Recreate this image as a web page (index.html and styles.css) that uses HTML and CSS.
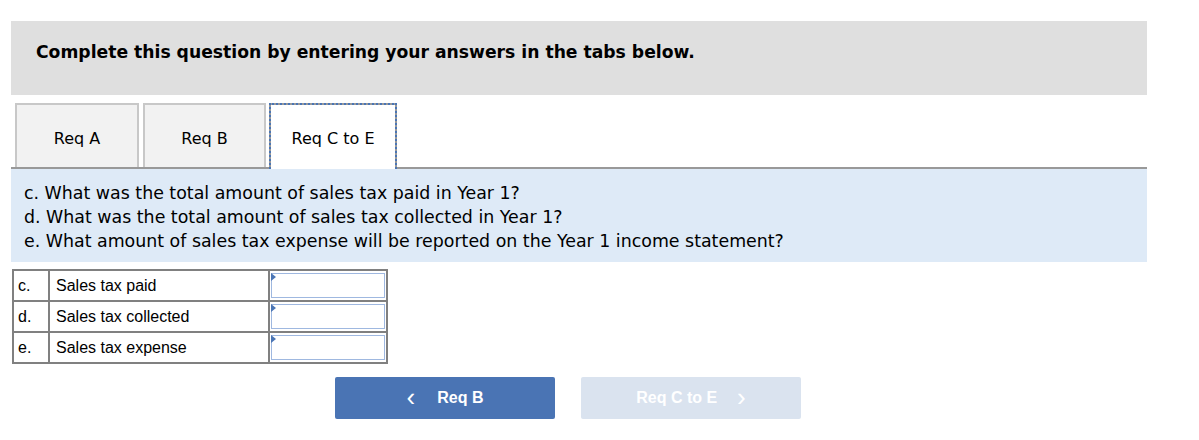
FILE: index.html
```html
<!DOCTYPE html>
<html>
<head>
<meta charset="utf-8">
<link rel="stylesheet" href="styles.css">
</head>
<body>
<div class="wrap">
  <div class="header">Complete this question by entering your answers in the tabs below.</div>
  <div class="tabs">
    <div class="tab tab-a">Req A</div>
    <div class="tab tab-b">Req B</div>
    <div class="tab tab-active">Req C to E</div>
  </div>
  <div class="panel">
    <div>c. What was the total amount of sales tax paid in Year 1?</div>
    <div>d. What was the total amount of sales tax collected in Year 1?</div>
    <div>e. What amount of sales tax expense will be reported on the Year 1 income statement?</div>
  </div>
  <table class="answers">
    <tr><td class="lbl">c.</td><td class="desc">Sales tax paid</td><td class="inp"><div class="box"></div></td></tr>
    <tr><td class="lbl">d.</td><td class="desc">Sales tax collected</td><td class="inp"><div class="box"></div></td></tr>
    <tr><td class="lbl">e.</td><td class="desc">Sales tax expense</td><td class="inp"><div class="box"></div></td></tr>
  </table>
  <div class="nav">
    <div class="btn btn-prev"><span class="chev">&lsaquo;</span><span>Req B</span></div>
    <div class="btn btn-next"><span>Req C to E</span><span class="chev">&rsaquo;</span></div>
  </div>
</div>
</body>
</html>
```
FILE: styles.css
```css
html, body { margin: 0; padding: 0; background: #fff; }
body { font-family: "DejaVu Sans", Verdana, sans-serif; color: #000; }
.wrap { width: 1136px; margin-left: 11px; padding-top: 21px; }
.header {
  background: #dfdfdf;
  height: 74px;
  box-sizing: border-box;
  padding-left: 25px;
  padding-bottom: 12px;
  display: flex;
  align-items: center;
  font-weight: bold;
  font-size: 17.2px;
}
.tabs {
  display: flex;
  margin-top: 8px;
  padding-left: 4px;
  border-bottom: 2px solid #999;
  height: 64px;
  align-items: flex-end;
}
.tab {
  box-sizing: border-box;
  height: 64px;
  background: #f2f2f2;
  border: 2px solid #c8c8c8;
  border-bottom: none;
  display: flex;
  align-items: center;
  justify-content: center;
  font-size: 16px;
  padding-top: 4px;
}
.tab-a { width: 124px; margin-right: 4px; }
.tab-b { width: 123px; margin-right: 3px; }
.tab-active {
  position: relative;
  width: 128px;
  height: 66px;
  margin-bottom: -2px;
  background: #fff;
  border: 2px solid #999;
  border-bottom: none;
  padding-top: 2px;
}
.tab-active::before {
  content: "";
  position: absolute;
  left: -2px;
  right: -2px;
  top: -2px;
  bottom: 0;
  border: 2px dotted #4a75b5;
  border-bottom: none;
}
.panel {
  background: #deeaf7;
  height: 93px;
  box-sizing: border-box;
  padding: 12px 0 0 13px;
  font-size: 17.4px;
  line-height: 24px;
}
.answers {
  margin-top: 7px;
  margin-left: 1px;
  border-collapse: collapse;
  table-layout: fixed;
  font-family: "Liberation Sans", Arial, sans-serif;
  font-size: 16px;
}
.answers td {
  border: 2px solid #808080;
  padding: 0;
  height: 27px;
}
.answers .lbl { width: 30px; padding-left: 4px; }
.answers .desc { width: 212px; padding-left: 6px; }
.answers .inp { width: 114px; padding: 1px; }
.box {
  height: 25px;
  border: 1px solid #9fb8e0;
  box-sizing: border-box;
  background: #fff;
  position: relative;
}
.box::before {
  content: "";
  position: absolute;
  left: -1px;
  top: -1px;
  border-left: 5px solid #4a75b5;
  border-top: 4px solid transparent;
  border-bottom: 4px solid transparent;
}
.nav {
  display: flex;
  margin-top: 13px;
  padding-left: 324px;
  gap: 26px;
}
.btn {
  width: 220px;
  height: 42px;
  border-radius: 2px;
  display: flex;
  align-items: center;
  justify-content: center;
  font-family: "Liberation Sans", Arial, sans-serif;
  font-weight: bold;
  font-size: 16px;
  color: #fff;
}
.btn-prev { background: #4a74b4; }
.btn-prev .chev { margin-right: 22px; }
.btn-next { background: #dae3ef; }
.btn-next .chev { margin-left: 20px; }
.chev { font-size: 26px; font-weight: normal; line-height: 1; margin-top: -3px; }
```
